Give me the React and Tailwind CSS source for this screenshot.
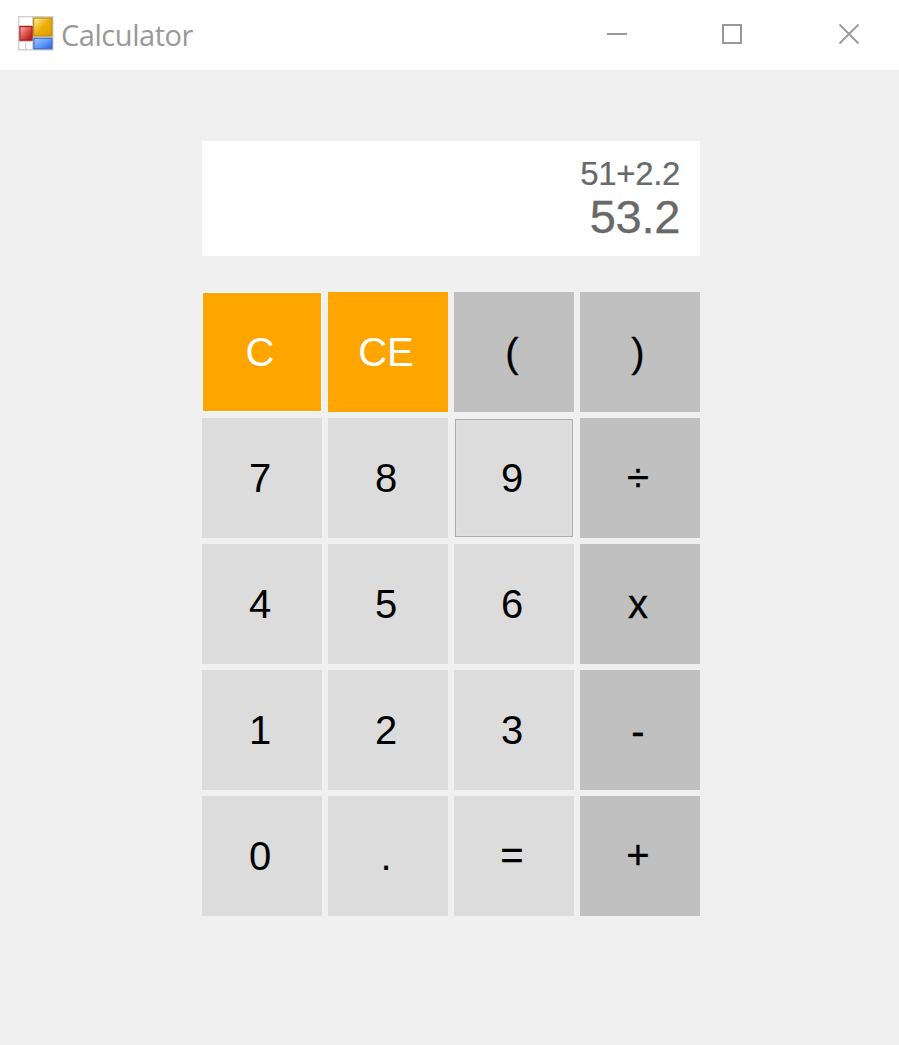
const keys = [
  ["C", "orange"], ["CE", "orange"], ["(", "op"], [")", "op"],
  ["7"], ["8"], ["9", "focus"], ["÷", "op"],
  ["4"], ["5"], ["6"], ["x", "op"],
  ["1"], ["2"], ["3"], ["-", "op"],
  ["0"], ["."], ["="], ["+", "op"],
];
const nudges = { "(": "pt-0.5", ")": "pt-0.5", "÷": "pb-[3px]", "+": "pb-[3px]", "-": "pt-0.5", "=": "pb-0.5 [-webkit-text-stroke:0.3px_black]" };
function tone(label, kind) {
  if (kind === "orange") return label === "C" ? "bg-[#ffa500] text-white border border-white" : "bg-[#ffa500] text-white";
  if (kind === "op") return "bg-[#c0c0c0] text-black [-webkit-text-stroke:0.3px_black]";
  if (kind === "focus") return "bg-[#dcdcdc] text-black shadow-[inset_0_0_0_1px_#f0f0f0,inset_0_0_0_2px_#adadad,inset_0_0_0_4px_#dfdfdf]";
  return "bg-[#dcdcdc] text-black";
}
function FormIcon() {
  return (
    <svg width="36" height="36" viewBox="0 0 36 36" className="block">
      <defs>
        <linearGradient id="gold" x1="0" y1="0" x2="1" y2="1"><stop offset="0" stopColor="#fff2a0" /><stop offset=".5" stopColor="#eab00c" /><stop offset="1" stopColor="#dc9c00" /></linearGradient>
        <linearGradient id="red" x1="0" y1="0" x2="1" y2="1"><stop offset="0" stopColor="#fbb8ae" /><stop offset=".5" stopColor="#d9534c" /><stop offset="1" stopColor="#a80c0c" /></linearGradient>
        <linearGradient id="blue" x1="0" y1="0" x2="1" y2="1"><stop offset="0" stopColor="#a4c8ff" /><stop offset=".5" stopColor="#649cff" /><stop offset="1" stopColor="#2c64dc" /></linearGradient>
      </defs>
      <rect x=".7" y="1.7" width="34.100" height="33.100" fill="#fff" stroke="#cfcfcf" strokeWidth="1.400" />
      <path d="M14.700 2V35M1 10.500H14M1 26.300H14M7.700 26V35M15 22H35" fill="none" stroke="#cfcfcf" strokeWidth="1.200" />
      <rect x="15.700" y="3" width="18.200" height="18" fill="url(#gold)" stroke="#b98b10" strokeWidth="1.200" />
      <rect x="1.900" y="11.600" width="12.200" height="13.600" fill="url(#red)" stroke="#b61c18" strokeWidth="1.200" />
      <rect x="15.900" y="23.200" width="18" height="10.600" fill="url(#blue)" stroke="#3b68c0" strokeWidth="1.200" />
    </svg>
  );
}
export default function App() {
  return (
    <div className="flex h-[1045px] w-[899px] flex-col overflow-hidden bg-[#f0f0f0] font-['Liberation_Sans',Arial,sans-serif]">
      <header className="flex h-[70px] shrink-0 items-start bg-white">
        <div className="pt-[15px] pl-[18px]"><FormIcon /></div>
        <h1 className="pt-[15px] pl-[7px] font-['Open_Sans','Noto_Sans',sans-serif] text-[29px] leading-[40px] tracking-[-0.45px] text-[#999]">Calculator</h1>
        <svg width="260" height="40" viewBox="600 15 260 40" className="mt-[15px] mr-[39px] ml-auto" fill="none" stroke="#999" strokeWidth="2">
          <path d="M607 34H627M723 25H741V43H723Z" />
          <path d="M839.500 24.500L858.500 43.500M858.500 24.500L839.500 43.500" strokeWidth="1.800" />
        </svg>
      </header>
      <main className="flex flex-col pt-[71px] pl-[202px]">
        <div className="flex h-[115px] w-[498px] flex-col items-end bg-white pt-[14px] pr-5 text-[#696969]">
          <div className="text-[33px] leading-[38px] tracking-[-0.35px] [-webkit-text-stroke:0.2px_#696969]">51+2.2</div>
          <div className="text-[47px] leading-[48px] tracking-[-0.3px] [-webkit-text-stroke:0.3px_#696969]">53.2</div>
        </div>
        <div className="mt-9 grid w-[498px] grid-cols-4 gap-1.5">
          {keys.map(([label, kind]) => (
            <button key={label} className={"flex h-[120px] items-center justify-center pr-1 text-[40px] leading-[46px] " + tone(label, kind) + " " + (nudges[label] || "")}>{label}</button>
          ))}
        </div>
      </main>
    </div>
  );
}
